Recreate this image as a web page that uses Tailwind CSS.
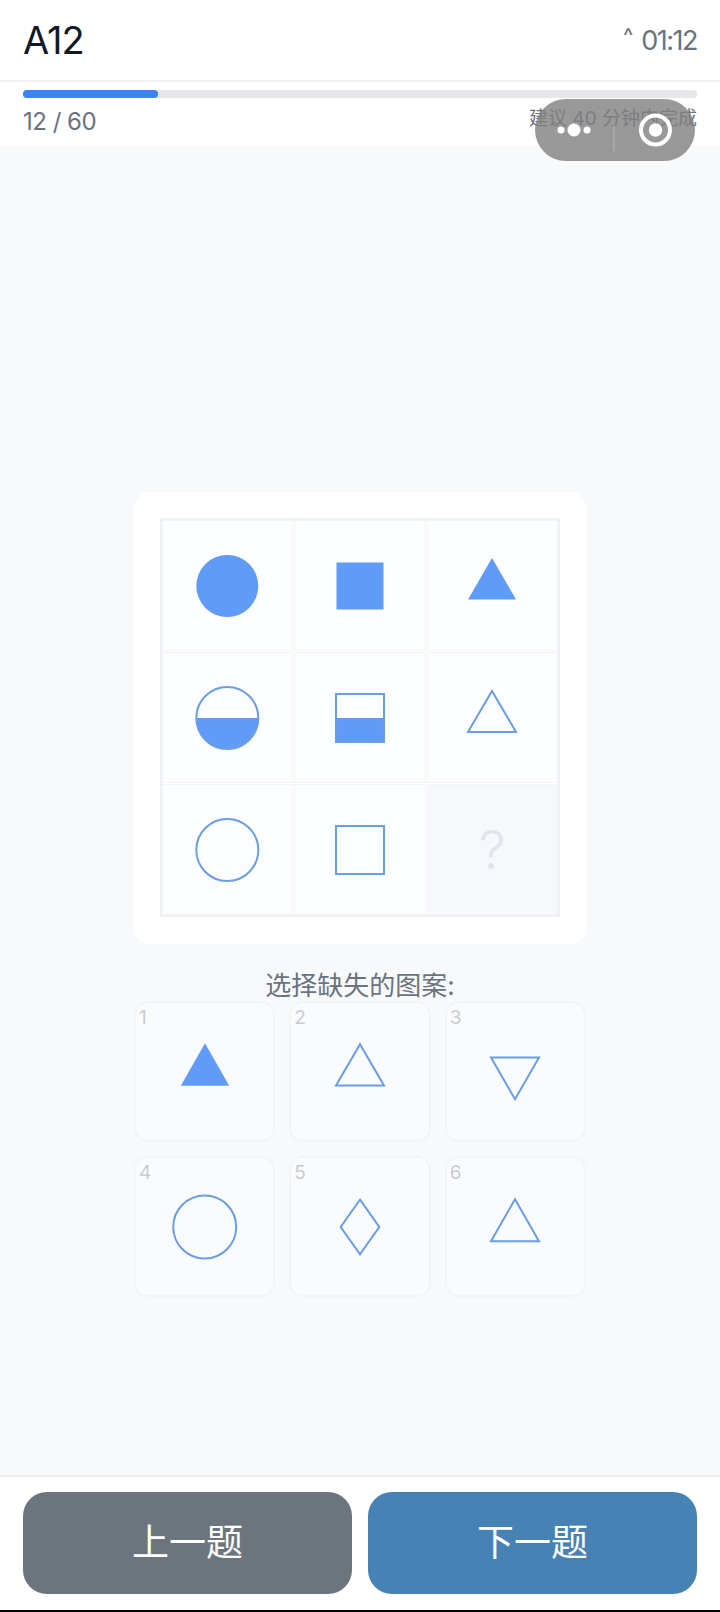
<!DOCTYPE html>
<html lang="zh-CN">
<head>
  <meta charset="UTF-8" />
  <meta name="viewport" content="width=device-width, initial-scale=1.0" />
  <title>A12</title>
  <script src="https://cdn.jsdelivr.net/npm/@tailwindcss/browser@4"></script>
</head>
<body class="bg-white font-['Inter','Noto_Sans_CJK_SC',sans-serif] text-[#6b7280]">
<div class="relative w-[720px] h-[1612px] overflow-hidden flex flex-col bg-[#f8f9fb]">

  <!-- Header -->
  <header class="h-[82px] shrink-0 bg-white border-b-2 border-[#eef0f3] px-[23px] flex items-center justify-between">
    <div class="text-[38px] leading-none tracking-[-1px] text-[#111827]">A12</div>
    <div class="flex items-center gap-[8px] leading-none">
      <span class="text-[22px] -mt-[8px]">^</span>
      <span class="text-[27px] tracking-[-1.5px]">01:12</span>
    </div>
  </header>

  <!-- Progress -->
  <div class="h-[64px] shrink-0 bg-white px-[23px] pt-[8px]">
    <div class="h-[8px] rounded-full bg-[#e5e7eb]">
      <div class="h-full w-[20%] rounded-full bg-[#3b82f6]"></div>
    </div>
    <div class="mt-[6px] flex items-center justify-between">
      <span class="text-[24px] leading-[36px] tracking-[-0.5px]">12 / 60</span>
      <span class="text-[19px] leading-[28px] -mt-[6px]">建议 40 分钟内完成</span>
    </div>
  </div>

  <!-- Question -->
  <main class="flex-1 flex flex-col items-center pt-[346px]">
    <div class="w-[452px] h-[452px] rounded-[16px] bg-white pl-[26px] pt-[26px]">
      <div class="grid grid-cols-3 w-[400px] h-[399px] border-2 border-[#eef0f4] gap-[1px] bg-white">
        <div class="flex items-center justify-center bg-[#fcfdfe] border border-[#f3f4f6]">
          <svg class="w-16 h-16 overflow-visible" viewBox="0 0 64 64"><circle cx="31.3" cy="32" r="31" fill="#619bf8" /></svg>
        </div>
        <div class="flex items-center justify-center bg-[#fcfdfe] border border-[#f3f4f6]">
          <svg class="w-16 h-16" viewBox="0 0 64 64"><rect x="8.5" y="8.5" width="47" height="47" fill="#619bf8" /></svg>
        </div>
        <div class="flex items-center justify-center bg-[#fcfdfe] border border-[#f3f4f6]">
          <svg class="w-16 h-16" viewBox="0 0 64 64"><polygon points="32,4 56,45.4 8,45.4" fill="#619bf8" /></svg>
        </div>
        <div class="flex items-center justify-center bg-[#fcfdfe] border border-[#f3f4f6]">
          <svg class="w-16 h-16 overflow-visible" viewBox="0 0 64 64"><path d="M.3 32a31 31 0 0 0 62 0z" fill="#619bf8" /><circle cx="31.3" cy="32" r="31" fill="none" stroke="#6a9de4" stroke-width="2" /></svg>
        </div>
        <div class="flex items-center justify-center bg-[#fcfdfe] border border-[#f3f4f6]">
          <svg class="w-16 h-16" viewBox="0 0 64 64"><rect x="8" y="32" width="48" height="24" fill="#619bf8" /><rect x="8" y="8" width="48" height="48" fill="none" stroke="#6a9de4" stroke-width="2" /></svg>
        </div>
        <div class="flex items-center justify-center bg-[#fcfdfe] border border-[#f3f4f6]">
          <svg class="w-16 h-16" viewBox="0 0 64 64"><polygon points="32,5 56,46 8,46" fill="none" stroke="#6a9de4" stroke-width="2" /></svg>
        </div>
        <div class="flex items-center justify-center bg-[#fcfdfe] border border-[#f3f4f6]">
          <svg class="w-16 h-16 overflow-visible" viewBox="0 0 64 64"><circle cx="31.3" cy="32" r="31" fill="none" stroke="#6a9de4" stroke-width="2" /></svg>
        </div>
        <div class="flex items-center justify-center bg-[#fcfdfe] border border-[#f3f4f6]">
          <svg class="w-16 h-16" viewBox="0 0 64 64"><rect x="8" y="8" width="48" height="48" fill="none" stroke="#6a9de4" stroke-width="2" /></svg>
        </div>
        <div class="flex items-center justify-center bg-[#f7f8fb] border border-[#f3f4f6] text-[54px] leading-none font-light text-[#e1e4ec]">?</div>
      </div>
    </div>

    <p class="mt-[26px] text-[26px] leading-[31px]">选择缺失的图案:</p>

    <!-- Options -->
    <div class="grid grid-cols-3 gap-[14px] w-[452px]">
      <div class="relative h-[141px] rounded-[14px] border-2 border-[#f3f4f6] bg-[#fafbfd] flex items-center justify-center">
        <span class="absolute left-[3px] top-[3px] text-[19px] leading-[24px] text-[#c9ccd1]">1</span>
        <svg class="w-16 h-16" viewBox="0 0 64 64"><polygon points="32,3.2 56.2,45.8 7.8,45.8" fill="#619bf8" /></svg>
      </div>
      <div class="relative h-[141px] rounded-[14px] border-2 border-[#f3f4f6] bg-[#fafbfd] flex items-center justify-center">
        <span class="absolute left-[3px] top-[3px] text-[19px] leading-[24px] text-[#c9ccd1]">2</span>
        <svg class="w-16 h-16" viewBox="0 0 64 64"><polygon points="32,4.2 56,45.5 8,45.5" fill="none" stroke="#6a9de4" stroke-width="2" /></svg>
      </div>
      <div class="relative h-[141px] rounded-[14px] border-2 border-[#f3f4f6] bg-[#fafbfd] flex items-center justify-center">
        <span class="absolute left-[3px] top-[3px] text-[19px] leading-[24px] text-[#c9ccd1]">3</span>
        <svg class="w-16 h-16" viewBox="0 0 64 64"><polygon points="32,59.2 56,17.5 8,17.5" fill="none" stroke="#6a9de4" stroke-width="2" /></svg>
      </div>
      <div class="relative h-[141px] rounded-[14px] border-2 border-[#f3f4f6] bg-[#fafbfd] flex items-center justify-center">
        <span class="absolute left-[3px] top-[3px] text-[19px] leading-[24px] text-[#c9ccd1]">4</span>
        <svg class="w-16 h-16 overflow-visible" viewBox="0 0 64 64"><circle cx="31.7" cy="32" r="31.5" fill="none" stroke="#6a9de4" stroke-width="2" /></svg>
      </div>
      <div class="relative h-[141px] rounded-[14px] border-2 border-[#f3f4f6] bg-[#fafbfd] flex items-center justify-center">
        <span class="absolute left-[3px] top-[3px] text-[19px] leading-[24px] text-[#c9ccd1]">5</span>
        <svg class="w-16 h-16" viewBox="0 0 64 64"><polygon points="32,4.7 51.3,32 32,59.3 12.7,32" fill="none" stroke="#6a9de4" stroke-width="2" /></svg>
      </div>
      <div class="relative h-[141px] rounded-[14px] border-2 border-[#f3f4f6] bg-[#fafbfd] flex items-center justify-center">
        <span class="absolute left-[3px] top-[3px] text-[19px] leading-[24px] text-[#c9ccd1]">6</span>
        <svg class="w-16 h-16" viewBox="0 0 64 64"><polygon points="32,4.2 56,46.2 8,46.2" fill="none" stroke="#6a9de4" stroke-width="2" /></svg>
      </div>
    </div>
  </main>

  <!-- Bottom buttons -->
  <footer class="h-[135px] shrink-0 bg-white border-t-2 border-[#eef0f3] px-[23px] pt-[15px] flex gap-[16px] items-start">
    <button class="flex-1 h-[102px] rounded-[24px] bg-[#6c757d] text-white text-[37px]">上一题</button>
    <button class="flex-1 h-[102px] rounded-[24px] bg-[#4682b4] text-white text-[37px]">下一题</button>
  </footer>
  <div class="h-[2px] shrink-0 bg-black"></div>

  <!-- WeChat capsule -->
  <div class="absolute left-[535px] top-[99px] w-[160px] h-[62px] rounded-full bg-[#808080]/80">
    <svg class="w-full h-full" viewBox="0 0 160 62">
      <circle cx="26" cy="31" r="3.5" fill="#fff" />
      <circle cx="39" cy="31" r="6.5" fill="#fff" />
      <circle cx="52" cy="31" r="3.5" fill="#fff" />
      <line x1="79" y1="26" x2="79" y2="52" stroke="#fff" stroke-opacity="0.3" stroke-width="1" />
      <circle cx="120.5" cy="31" r="14.5" fill="none" stroke="#fff" stroke-width="4" />
      <circle cx="120.5" cy="31" r="6.7" fill="#fff" />
    </svg>
  </div>
</div>
</body>
</html>
